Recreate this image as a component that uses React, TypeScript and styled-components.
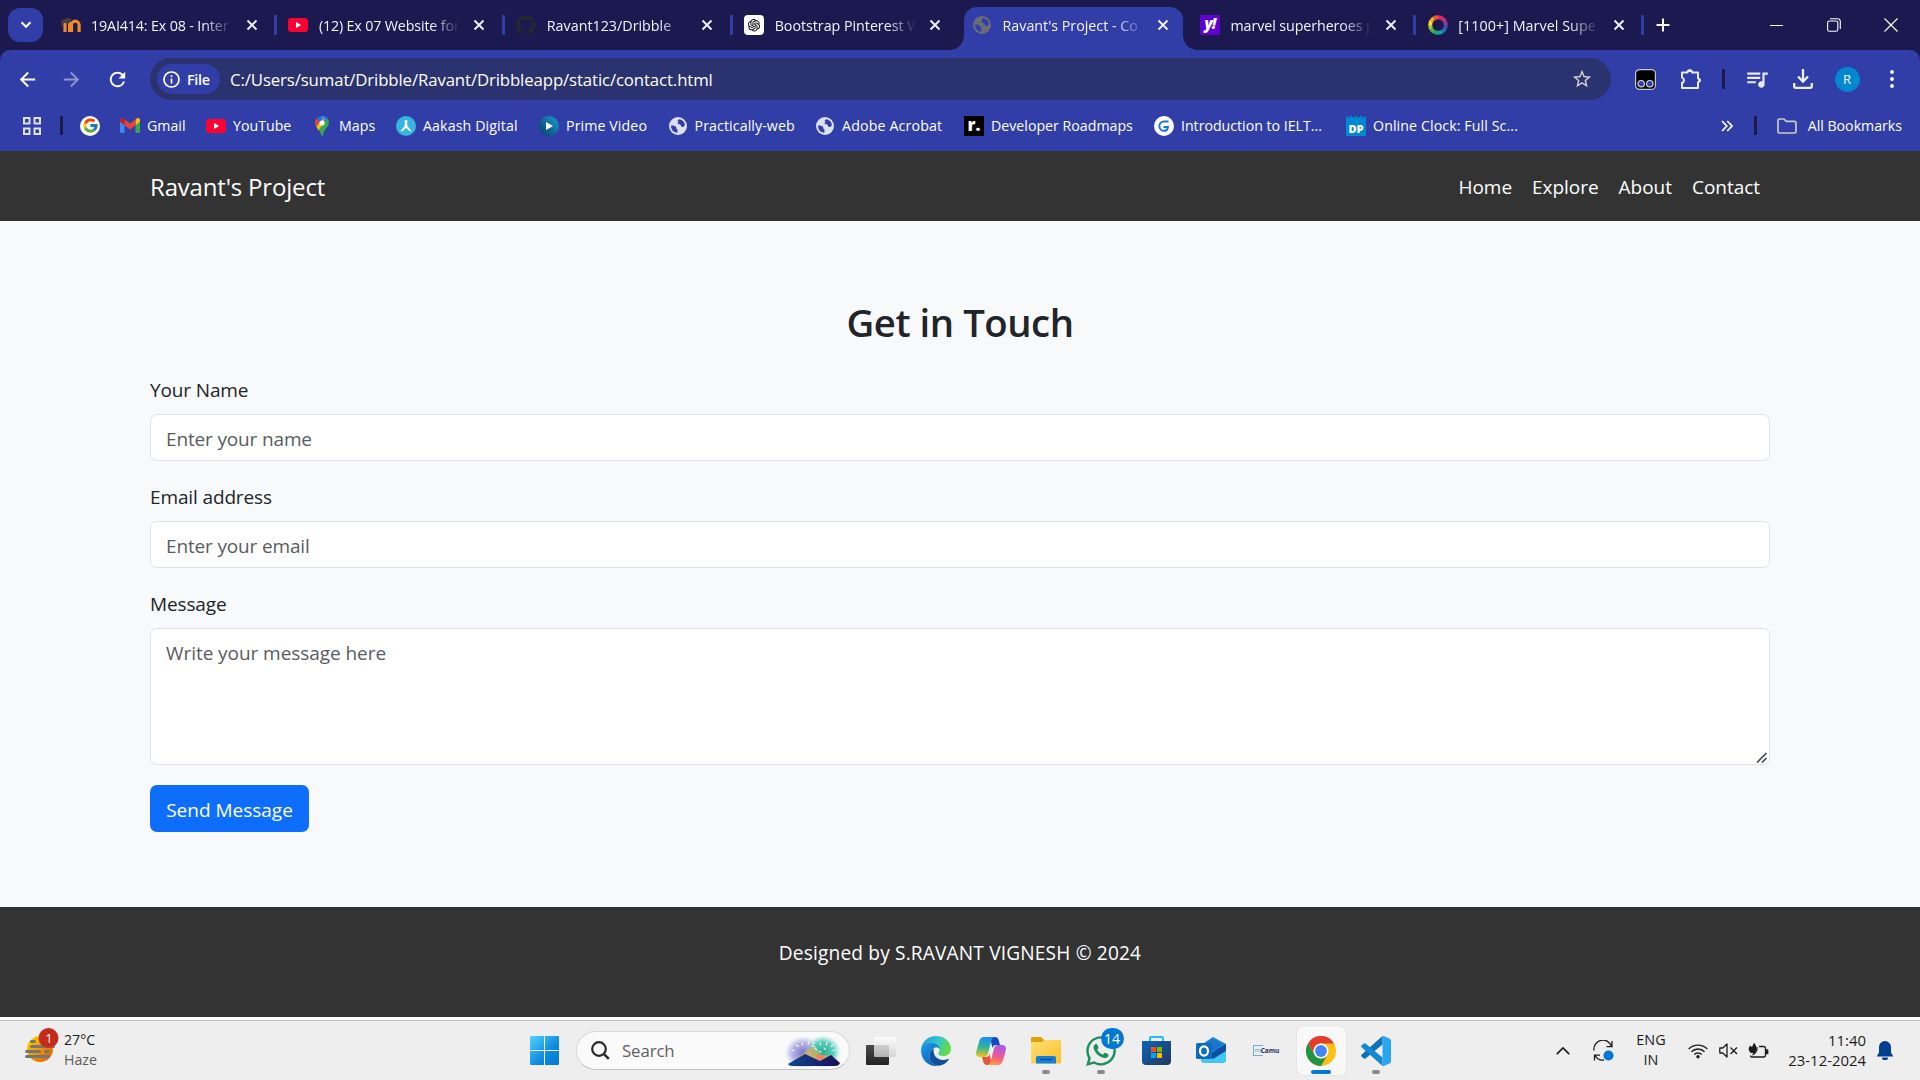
import React from "react";
import styled, { createGlobalStyle, css } from "styled-components";
import { FaGithub, FaWhatsapp } from "react-icons/fa";
import { AiOutlineOpenAI } from "react-icons/ai";
import { FcGoogle } from "react-icons/fc";
import {
  MdQueueMusic,
  MdStarBorder,
  MdRefresh,
  MdArrowBack,
  MdArrowForward,
} from "react-icons/md";

const GlobalStyle = createGlobalStyle`
  *, *::before, *::after { box-sizing: border-box; }
  html, body { margin: 0; padding: 0; overflow: hidden; }
  body {
    font-family: "Open Sans", "Noto Sans", sans-serif;
    background: #fff;
  }
  svg { display: block; flex: none; }
`;

const FRAME = "#1b194f";
const ACCENT = "#323ea8";

const Screen = styled.div`
  width: 1920px;
  height: 1080px;
  display: flex;
  flex-direction: column;
  overflow: hidden;
`;

/* ---------- Browser: tab strip ---------- */

const TabStrip = styled.div`
  height: 50px;
  flex: none;
  display: flex;
  align-items: stretch;
  background: ${FRAME};
  padding-left: 8px;
`;

const TabSearch = styled.div`
  width: 35px;
  height: 34px;
  margin: 8px 5px 0 0;
  border-radius: 12px;
  background: ${ACCENT};
  display: flex;
  align-items: center;
  justify-content: center;
`;

const TabBox = styled.div<{ $active?: boolean; $divider?: boolean }>`
  position: relative;
  width: 227.9px;
  flex: none;
  display: flex;
  align-items: center;
  padding: 0 0 0 12.5px;
  &::after {
    content: "";
    position: absolute;
    right: -1px;
    top: 15px;
    width: 3px;
    height: 20px;
    border-radius: 1px;
    background: ${(p) => (p.$divider ? ACCENT : "transparent")};
  }
  ${(p) =>
    p.$active &&
    css`
      &::before {
        content: "";
        position: absolute;
        inset: 7px 4px 0 4px;
        background: ${ACCENT};
        border-radius: 13px 13px 0 0;
      }
    `}
`;

const Flare = styled.span<{ $side: "left" | "right" }>`
  position: absolute;
  bottom: 0;
  width: 14px;
  height: 14px;
  ${(p) => (p.$side === "left" ? "left: -10px;" : "right: -10px;")}
  background: radial-gradient(
    circle at ${(p) => (p.$side === "left" ? "0 0" : "100% 0")},
    transparent 13.5px,
    ${ACCENT} 14px
  );
`;

const Favicon = styled.span`
  position: relative;
  width: 20px;
  height: 20px;
  flex: none;
  display: flex;
  align-items: center;
  justify-content: center;
`;

const TabTitle = styled.span<{ $tracking?: number }>`
  position: relative;
  margin-left: 10.5px;
  width: 141px;
  flex: none;
  white-space: nowrap;
  font-size: 14.3px;
  line-height: 24px;
  padding-top: 1px;
  letter-spacing: ${(p) => p.$tracking ?? -0.15}px;
  color: #f1f2fb;
  -webkit-mask-image: linear-gradient(90deg, #000 112px, transparent 141px);
  mask-image: linear-gradient(90deg, #000 112px, transparent 141px);
`;

const TabClose = styled.span`
  position: relative;
  margin-left: 13.5px;
  width: 12px;
  display: flex;
`;

const NewTab = styled.div`
  width: 39px;
  display: flex;
  align-items: center;
  justify-content: center;
`;

const WindowControls = styled.div`
  margin-left: auto;
  padding-right: 1px;
  display: flex;
  align-items: center;
`;

const WindowButton = styled.div`
  width: 57px;
  display: flex;
  justify-content: center;
`;

/* ---------- Browser: toolbar ---------- */

const Chrome = styled.div`
  flex: none;
  height: 101px;
  background: ${FRAME};
`;

const ChromeInner = styled.div`
  height: 101px;
  background: ${ACCENT};
  border-radius: 10px 10px 0 0;
  padding-top: 8px;
`;

const Toolbar = styled.div`
  height: 42px;
  display: flex;
  align-items: center;
  padding-left: 5px;
  color: #fff;
`;

const Slot = styled.div<{ $w: number; $dim?: boolean }>`
  width: ${(p) => p.$w}px;
  flex: none;
  display: flex;
  justify-content: center;
  align-items: center;
  opacity: ${(p) => (p.$dim ? 0.45 : 1)};
`;

const Omnibox = styled.div`
  width: 1461px;
  height: 42px;
  margin: 0 11.5px 0 10px;
  border-radius: 21px;
  background: #2b3270;
  display: flex;
  align-items: center;
  padding: 0 18px 0 7px;
`;

const FileChip = styled.div`
  width: 63px;
  height: 30px;
  border-radius: 15px;
  background: ${ACCENT};
  display: flex;
  align-items: center;
  gap: 7px;
  padding-left: 6px;
  font-size: 14.3px;
  font-weight: 600;
  letter-spacing: -0.3px;
`;

const Url = styled.div`
  margin-left: 10px;
  flex: 1;
  font-size: 16.8px;
  line-height: 26px;
  padding-top: 1px;
  letter-spacing: -0.12px;
  color: #fff;
`;

const Rule = styled.span<{ $h: number }>`
  width: 2.5px;
  height: ${(p) => p.$h}px;
  flex: none;
  border-radius: 1px;
  background: ${FRAME};
`;

const Avatar = styled.div`
  width: 25px;
  height: 25px;
  border-radius: 50%;
  background: #0288d1;
  font-size: 13px;
  line-height: 25px;
  text-align: center;
  color: #fff;
`;

const BookmarkBar = styled.div`
  height: 51px;
  display: flex;
  align-items: center;
`;

const Bookmark = styled.div<{ $w?: number; $tracking?: number }>`
  width: ${(p) => (p.$w ? `${p.$w}px` : "auto")};
  flex: none;
  display: flex;
  align-items: center;
  gap: 7px;
  white-space: nowrap;
  font-size: 14.2px;
  line-height: 24px;
  letter-spacing: ${(p) => p.$tracking ?? 0}px;
  color: #fff;
`;

const BookmarkEnd = styled.div`
  margin-left: auto;
  padding-right: 18px;
  display: flex;
  align-items: center;
`;

const FolderSlot = styled.span`
  margin: 0 4px 0 20px;
`;

/* ---------- Web page ---------- */

const NavBar = styled.nav`
  height: 70px;
  flex: none;
  background: #333;
  display: flex;
  align-items: center;
  justify-content: space-between;
  padding: 1px 150px 0;
  color: #fff;
`;

const Brand = styled.span`
  font-size: 24px;
  line-height: 38px;
  letter-spacing: -0.18px;
`;

const NavLinks = styled.div`
  display: flex;
`;

const NavLink = styled.a`
  padding: 0 10px;
  font-size: 19px;
  line-height: 30px;
  letter-spacing: -0.03px;
  color: #fff;
`;

const ContactSection = styled.main`
  height: 686px;
  flex: none;
  background: #f8f9fb;
  padding: 75px 150px;
`;

const Heading = styled.h2`
  height: 48px;
  margin: 0 0 30px;
  padding-top: 2px;
  font-size: 38.3px;
  line-height: 48px;
  font-weight: 600;
  letter-spacing: -0.46px;
  text-align: center;
  color: #212529;
`;

const Field = styled.div`
  display: flex;
  flex-direction: column;
  gap: 10px;
  margin-bottom: 20px;
  font-size: 19px;
  color: #212529;
`;

const FieldLabel = styled.label`
  height: 30px;
  line-height: 30px;
  padding-top: 1px;
  letter-spacing: -0.13px;
`;

const controlStyle = css`
  width: 1620px;
  display: block;
  border: 1px solid #dee2e6;
  border-radius: 7px;
  background: #fff;
  padding: 9px 15px 6px;
  font: inherit;
  line-height: 30px;
  letter-spacing: -0.15px;
  color: #212529;
  outline: none;
  &::placeholder {
    color: #595c5f;
    opacity: 1;
  }
`;

const TextInput = styled.input`
  ${controlStyle}
  height: 47px;
`;

const TextAreaWrap = styled.div`
  position: relative;
  height: 137px;
`;

const TextArea = styled.textarea`
  ${controlStyle}
  height: 137px;
  resize: none;
  letter-spacing: -0.06px;
`;

const Grip = styled.svg`
  position: absolute;
  right: 2px;
  bottom: 1px;
`;

const SubmitButton = styled.button`
  width: 159px;
  height: 47px;
  border: 0;
  border-radius: 7px;
  background: #0d6efd;
  color: #fff;
  font-family: inherit;
  font-size: 19px;
  line-height: 30px;
  padding: 3px 0 0;
`;

const Footer = styled.footer`
  height: 110px;
  flex: none;
  background: #333;
  color: #fff;
  padding-top: 31px;
  text-align: center;
  font-size: 19.1px;
  line-height: 30px;
  letter-spacing: 0.17px;
`;

/* ---------- Taskbar ---------- */

const Taskbar = styled.div`
  margin-top: 3px;
  height: 60px;
  flex: none;
  background: #eee;
  border-top: 1px solid #bdbdbd;
  display: flex;
  align-items: center;
  color: #1c1c1c;
`;

const Weather = styled.div`
  width: 517px;
  padding-left: 24px;
  display: flex;
  align-items: center;
  gap: 4px;
`;

const TwoLines = styled.div<{ $align?: string; $w?: number; $size?: number }>`
  width: ${(p) => (p.$w ? `${p.$w}px` : "auto")};
  text-align: ${(p) => p.$align ?? "left"};
  font-size: ${(p) => p.$size ?? 14.4}px;
  line-height: 20px;
  padding-bottom: 2px;
  white-space: nowrap;
`;

const Muted = styled.div`
  color: #5c5c5c;
`;

const SearchBox = styled.div`
  width: 274px;
  height: 39px;
  margin: 0 3.5px 0 4px;
  border: 1px solid #d9d9d9;
  border-bottom-color: #c3c3c3;
  border-radius: 20px;
  background: #fafafa;
  display: flex;
  align-items: center;
  padding: 0 8px 0 14px;
  font-size: 16.8px;
  letter-spacing: -0.1px;
  color: #5f5f5f;
`;

const SearchLabel = styled.span`
  margin-left: 12px;
  flex: 1;
`;

const TaskApp = styled.div<{ $active?: boolean }>`
  position: relative;
  width: ${(p) => (p.$active ? 49 : 55)}px;
  height: 49px;
  margin: 0 ${(p) => (p.$active ? 3 : 0)}px;
  flex: none;
  display: flex;
  align-items: center;
  justify-content: center;
  border-radius: 6px;
  background: ${(p) => (p.$active ? "#f8f8f8" : "transparent")};
  box-shadow: ${(p) => (p.$active ? "0 0 1px #bbb" : "none")};
`;

const RunningMark = styled.span<{ $focused?: boolean }>`
  position: absolute;
  bottom: 1px;
  left: 50%;
  transform: translateX(-50%);
  width: ${(p) => (p.$focused ? 20 : 8)}px;
  height: 4px;
  border-radius: 2px;
  background: ${(p) => (p.$focused ? "#0078d4" : "#8a8a8a")};
`;

const Badge = styled.span`
  position: absolute;
  left: 27px;
  top: 2px;
  width: 23px;
  height: 21px;
  border-radius: 11px;
  background: #0078d4;
  color: #fff;
  font-size: 14px;
  line-height: 21px;
  text-align: center;
`;

const Tray = styled.div`
  margin-left: auto;
  padding-right: 20px;
  display: flex;
  align-items: center;
`;

/* ---------- Drawings ---------- */

const CloseMark = () => (
  <svg width="12" height="12" viewBox="0 0 12 12" stroke="#f1f2fb" strokeWidth="1.9" fill="none">
    <path d="M1.5 1.5l9 9M10.5 1.5l-9 9" />
  </svg>
);

const MoodleIcon = () => (
  <svg width="20" height="16" viewBox="0 0 20 16">
    <path d="M4 6v9M8.6 15V7.8a3.2 3.2 0 0 1 1.4-2M10.5 15V8a3.5 3.5 0 0 1 7.6 0v7" fill="none" stroke="#f08a24" strokeWidth="3.2" />
    <path d="M0 4l6-3 5 1-4 4.5-4-.7z" fill="#4a4340" />
    <path d="M1 4v5" stroke="#6a5a50" strokeWidth=".8" />
  </svg>
);

const YouTubeIcon = () => (
  <svg width="20" height="14" viewBox="0 0 20 14">
    <rect width="20" height="14" rx="3" fill="#ff0033" />
    <path d="M8 4l5.200 3L8 10z" fill="#fff" />
  </svg>
);

const GlobeIcon = ({ color, hole }: { color: string; hole: string }) => (
  <svg width="18" height="18" viewBox="0 0 18 18">
    <circle cx="9" cy="9" r="9" fill={color} />
    <path d="M2 8.500c2.500 0 4.200.3 5 1.300.6.8-.1 1.900 1 2.300.9.3.4 1.800.3 3.600C4.600 15.600 2 12.700 2 8.500z" fill={hole} />
    <path d="M10.500 2.200c-1.800.7-2.300 1.500-1.300 2.200.9.7-.9 1-.6 2.200.3 1 2.300.3 3 1.300.6.9.3 1.700 1.700 2 1.300.2 2-.7 2.600-1.600C15.700 5 13.500 2.700 10.500 2.200z" fill={hole} />
  </svg>
);

const ChatGptIcon = () => (
  <svg width="20" height="20" viewBox="0 0 20 20">
    <rect width="20" height="20" rx="4" fill="#fff" />
    <AiOutlineOpenAI x={2} y={2} width={16} height={16} size={16} color="#111" />
  </svg>
);

const YahooTile = styled.span`
  width: 20px;
  height: 20px;
  background: #5f01d1;
  color: #fff;
  font-size: 15px;
  font-weight: 800;
  font-style: italic;
  line-height: 17px;
  letter-spacing: -1px;
  text-align: center;
`;

const wheel = ["#e8275b", "#c8307f", "#8a3b98", "#4a4fa3", "#2471b8", "#1b9bb5", "#23a567", "#55b447", "#a8c93a", "#f5e131", "#f6a81c", "#ee5a24"];
const WheelIcon = () => (
  <svg width="20" height="20" viewBox="-10 -10 20 20">
    {wheel.map((c, i) => (
      <path key={c} d="M0 -9.800A9.800 9.800 0 0 1 4.900 -8.490L2.900 -5.020A5.800 5.800 0 0 0 0 -5.800z" fill={c} transform={`rotate(${i * 30})`} />
    ))}
  </svg>
);

const GoogleBadge = styled.span`
  width: 20px;
  height: 20px;
  border-radius: 50%;
  background: #fff;
  display: flex;
  align-items: center;
  justify-content: center;
`;

const GmailIcon = () => (
  <svg width="20" height="15" viewBox="0 0 20 15">
    <path d="M0 2v11.500A1.500 1.500 0 0 0 1.500 15H4.500V5z" fill="#4285f4" />
    <path d="M20 2v11.500a1.500 1.500 0 0 1-1.500 1.500H15.500V5z" fill="#34a853" />
    <path d="M15.500 1.500v5.700L20 3.800V2c0-1.900-2.100-2.600-3.400-1.500z" fill="#fbbc04" />
    <path d="M4.500 7.200V1.500L10 5.600l5.500-4.100v5.700L10 11.400z" fill="#ea4335" />
    <path d="M0 2v1.800l4.500 3.400V1.500L3.400.5C2.100-.6 0 .1 0 2z" fill="#c5221f" />
  </svg>
);

const MapsIcon = () => (
  <svg width="20" height="20" viewBox="0 0 20 20">
    <path d="M10 0a7 7 0 0 1 5.200 2.300L10 8 6 2z" fill="#4285f4" />
    <path d="M4.700 2.400A7 7 0 0 1 7.800.4L11 4.500 6.500 9.500 3 7a7 7 0 0 1 1.700-4.600z" fill="#1a73e8" />
    <path d="M4.500 2.600L8 5.500 4.300 10.500A7 7 0 0 1 4.500 2.600z" fill="#ea4335" />
    <path d="M4.200 10.500L11.500 2.500l1.500 5-6.500 7z" fill="#fbbc04" />
    <path d="M15.200 2.300c2.700 3 2 6.500-.2 9.200-2.100 2.600-3.600 4.500-4 7.500-.2 1.300-1.500 1.300-1.800 0-.4-2.200-1.400-3.500-2.700-5z" fill="#34a853" />
    <circle cx="10" cy="7" r="2.600" fill="#fff" />
  </svg>
);

const AakashIcon = () => (
  <svg width="20" height="20" viewBox="0 0 20 20">
    <circle cx="10" cy="10" r="10" fill="#35b5e0" />
    <circle cx="10" cy="5.500" r="1.600" fill="#fff" />
    <path d="M9 6.500h2l.6 4 4 4.500-1.500.6L10 12l-4.100 3.600-1.500-.6 4-4.500z" fill="#fff" />
  </svg>
);

const PrimeIcon = () => (
  <svg width="20" height="20" viewBox="0 0 20 20">
    <defs>
      <linearGradient id="prime" x1="0" y1="1" x2="1" y2="0">
        <stop offset="0" stopColor="#0a3a66" />
        <stop offset="1" stopColor="#16a0cf" />
      </linearGradient>
    </defs>
    <circle cx="10" cy="10" r="10" fill="url(#prime)" />
    <path d="M7 6l7 4-7 4z" fill="#fff" />
  </svg>
);

const RoadmapTile = styled.span`
  width: 20px;
  height: 20px;
  background: #000;
  color: #fff;
  font-size: 17px;
  line-height: 17px;
  font-weight: 800;
  text-align: center;
`;

const ClockTile = styled.span`
  width: 20px;
  height: 20px;
  background: radial-gradient(circle at 2.5px 0, ${ACCENT} 1.300px, #0288d1 1.800px) 0 0 / 5px 20px;
  color: #fff;
  font-size: 11px;
  line-height: 14px;
  padding-top: 6px;
  font-weight: 800;
  letter-spacing: 0;
  text-align: center;
`;

const IeltsIcon = () => (
  <svg width="20" height="20" viewBox="0 0 20 20">
    <circle cx="10" cy="10" r="10" fill="#fff" />
    <path d="M14.500 5.500H10a4.500 4.500 0 0 0 0 9.300q3.500 0 4-3.800H9.500" fill="none" stroke="#1976d2" strokeWidth="2" />
  </svg>
);

const HazeIcon = () => (
  <svg width="36" height="48" viewBox="0 0 36 48">
    <defs>
      <linearGradient id="sun" x1="0" y1="0" x2="1" y2="1">
        <stop offset="0" stopColor="#ffdc00" />
        <stop offset="1" stopColor="#e65100" />
      </linearGradient>
    </defs>
    <circle cx="16" cy="22" r="13" fill="url(#sun)" />
    <path d="M7.500 14.500h3M7.500 19.500h22M2.500 24.500h13M21.500 24.500h3M2.500 29.500h22" stroke="#757575" strokeWidth="3" strokeLinecap="round" />
    <circle cx="24.500" cy="11" r="10" fill="#c42b1c" />
    <text x="25" y="15.500" fontSize="13" fill="#fff" textAnchor="middle">1</text>
  </svg>
);

const StartIcon = () => (
  <svg width="29" height="29" viewBox="0 0 29 29">
    <defs>
      <linearGradient id="win" x1="0" y1="0" x2="1" y2="1">
        <stop offset="0" stopColor="#4fd4ff" />
        <stop offset=".6" stopColor="#1089e0" />
        <stop offset="1" stopColor="#0078d4" />
      </linearGradient>
    </defs>
    <path d="M1 0h13v14H0V1q0-1 1-1zM15 0h13q1 0 1 1v13H15zM0 15h14v14H1q-1 0-1-1zM15 15h14v13q0 1-1 1H15z" fill="url(#win)" />
  </svg>
);

const SearchArt = () => (
  <svg width="56" height="32" viewBox="0 0 56 32">
    <defs>
      <radialGradient id="glowL">
        <stop offset="0" stopColor="#7a76cc" />
        <stop offset=".6" stopColor="#a3a0e2" stopOpacity=".8" />
        <stop offset="1" stopColor="#b0aef0" stopOpacity="0" />
      </radialGradient>
      <radialGradient id="glowR">
        <stop offset="0" stopColor="#27b08f" />
        <stop offset=".6" stopColor="#3cc4b4" stopOpacity=".85" />
        <stop offset="1" stopColor="#8be0d8" stopOpacity="0" />
      </radialGradient>
      <linearGradient id="hill" x1="0" y1="0" x2="1" y2="0">
        <stop offset="0" stopColor="#0d4a8c" />
        <stop offset="1" stopColor="#1d0a5c" />
      </linearGradient>
    </defs>
    <ellipse cx="18" cy="18" rx="18" ry="17" fill="url(#glowL)" />
    <ellipse cx="38" cy="17" rx="18" ry="17" fill="url(#glowR)" />
    <path d="M10 25l10-8 8-6 8 10 8-1 6 6z" fill="#d9ae5c" opacity=".75" />
    <path d="M30 20l5 6 6-6z" fill="#ff7a5c" />
    <path d="M3 29l17-10 15 7 11-6 9 8q-1 3-5 3H7q-3 0-4-2z" fill="url(#hill)" />
    <path d="M11 10l2.500 1.500M17 8l.6 2M24 7l-.7 2M7 15l2 .7M30 12l-3-1.500M32 15l-2-1.500M35 8l.7 2M42 7l-.8 3M48 10l-2 1.500M50 15l-3 .7M36 17l-2-.7M39 13l1.500 1.500M29 9l-.7-1.500" stroke="#fffbe0" strokeWidth="1.100" strokeLinecap="round" />
  </svg>
);

const TaskViewIcon = () => (
  <svg width="30" height="28" viewBox="0 0 30 28">
    <defs>
      <linearGradient id="tvb" x1="0" y1="0" x2="0" y2="1">
        <stop offset="0" stopColor="#4a4a4a" />
        <stop offset="1" stopColor="#222" />
      </linearGradient>
      <linearGradient id="tvf" x1="0" y1="0" x2="0" y2="1">
        <stop offset="0" stopColor="#fff" />
        <stop offset="1" stopColor="#d0d0d0" />
      </linearGradient>
    </defs>
    <rect x="0" y="8" width="23" height="20" rx="1" fill="url(#tvb)" />
    <rect x="8" y="0" width="22" height="20" rx="1" fill="url(#tvf)" opacity=".82" />
  </svg>
);

const EdgeIcon = () => (
  <svg width="30" height="30" viewBox="0 0 30 30">
    <defs>
      <linearGradient id="eg1" x1="0" y1="0" x2="1" y2=".3">
        <stop offset="0" stopColor="#2196d8" />
        <stop offset=".55" stopColor="#32c3d2" />
        <stop offset="1" stopColor="#62dc4a" />
      </linearGradient>
      <linearGradient id="eg2" x1="0" y1="0" x2=".6" y2="1">
        <stop offset="0" stopColor="#1a9be8" />
        <stop offset="1" stopColor="#0a63c0" />
      </linearGradient>
    </defs>
    <path d="M0 14C.5 6 7 0 15 0c9 0 15 6.500 15 12.500 0 5-3.600 7.500-7.500 7.500-3 0-5.200-1-5.200-2.300 0-1 1.300-1.500 1.300-3.700C18.600 11 15 8.500 10.500 8.500 5 8.500 1 11.500 0 14z" fill="url(#eg1)" />
    <path d="M0 14c1-4.500 5-7 10-7 5.500 0 8.600 3 8.600 6.500-1-1.800-2.600-2.500-4.200-2-3.400 1-6 4.300-6 8.700 0 4.500 3.500 8.500 8.600 9.600C7.500 31 0 24 0 14z" fill="url(#eg2)" />
    <path d="M12.800 12.300c-3.300 2-4.700 5-4.400 8.500.4 4.800 4.500 8.800 9.600 9 4-.4 7.800-2.900 9.800-6.200.4-.8-.2-1-.8-.7C19 26.500 11 21 12.800 12.300z" fill="#0f4f9c" />
  </svg>
);

const CopilotIcon = () => (
  <svg width="30" height="28" viewBox="0 0 30 28">
    <defs>
      <linearGradient id="cp1" x1=".4" y1="0" x2=".3" y2="1">
        <stop offset="0" stopColor="#1b8ff0" />
        <stop offset=".5" stopColor="#2fb39a" />
        <stop offset="1" stopColor="#f2c811" />
      </linearGradient>
      <linearGradient id="cp2" x1=".6" y1="0" x2=".4" y2="1">
        <stop offset="0" stopColor="#a35cf0" />
        <stop offset=".55" stopColor="#f0568f" />
        <stop offset="1" stopColor="#ff9a4a" />
      </linearGradient>
    </defs>
    <path d="M14 0h5c2 0 3 1 3.600 3l1.400 5h-4c-2 0-3 1-3.600 3z" fill="#1648c0" />
    <path d="M16 28h-5c-2 0-3-1-3.600-3L6 20h4c2 0 3-1 3.600-3z" fill="#e8543f" />
    <path d="M8 0h11c-2 .3-3 1.500-3.600 3.500L12 16.500c-.6 2-2 3.500-4 3.500H4c-3.500 0-4.600-2.500-3.700-5.500L3.300 4C4.200 1.300 5.500 0 8 0z" fill="url(#cp1)" />
    <path d="M22 28H11c2-.3 3-1.500 3.600-3.500L18 11.500c.6-2 2-3.500 4-3.500h4c3.500 0 4.600 2.500 3.700 5.500L26.700 24c-.9 2.700-2.200 4-4.700 4z" fill="url(#cp2)" />
  </svg>
);

const ExplorerIcon = () => (
  <svg width="30" height="27" viewBox="0 0 30 27">
    <defs>
      <linearGradient id="fold" x1="0" y1="0" x2="1" y2="1">
        <stop offset="0" stopColor="#ffe17a" />
        <stop offset="1" stopColor="#fdbf22" />
      </linearGradient>
    </defs>
    <path d="M1 0h9l3 3h0l-2 5H0V1q0-1 1-1z" fill="#dfa009" />
    <path d="M0 5h11l3-2h15q1 0 1 1v21q0 1.500-1.500 1.500H1.500Q0 26.500 0 25z" fill="url(#fold)" />
    <path d="M5 26.500V21q0-2 2-2h16q2 0 2 2v5.500z" fill="#1380d8" />
    <path d="M9 22.500h12" stroke="#0a4c94" strokeWidth="1.300" />
  </svg>
);

const StoreIcon = () => (
  <svg width="29" height="29" viewBox="0 0 29 29">
    <defs>
      <linearGradient id="store" x1="0" y1="0" x2="1" y2="1">
        <stop offset="0" stopColor="#0b66b8" />
        <stop offset="1" stopColor="#24355c" />
      </linearGradient>
    </defs>
    <path d="M8 6V2q0-1 1-1h11q1 0 1 1v4" fill="none" stroke="#28bdf0" strokeWidth="2" />
    <path d="M0 5h29v20q0 4-4 4H4q-4 0-4-4z" fill="url(#store)" />
    <path d="M9 11h5v5H9z" fill="#f25022" />
    <path d="M15 11h5v5h-5z" fill="#7fba00" />
    <path d="M9 17h5v5H9z" fill="#00a4ef" />
    <path d="M15 17h5v5h-5z" fill="#ffb900" />
  </svg>
);

const OutlookIcon = () => (
  <svg width="30" height="27" viewBox="0 0 30 27">
    <path d="M5 8L17 0l13 7v10H5z" fill="#1b86d8" />
    <path d="M8 7l9-5 9 5-8 8z" fill="#1a74cc" />
    <path d="M5 17l12-3 13-5v14q0 3-3 3H8q-3 0-3-3z" fill="#3fc8f4" />
    <path d="M13 17l17-10v7l-13 8z" fill="#0b4f9e" />
    <rect x="0" y="6" width="16" height="16" rx="1.500" fill="#0f6cbd" />
    <ellipse cx="8" cy="14" rx="4" ry="4.600" fill="none" stroke="#fff" strokeWidth="2.200" />
  </svg>
);

const CamuBox = styled.span`
  display: flex;
  align-items: center;
`;
const CamuFrame = styled.span`
  width: 10px;
  height: 11px;
  border: 1px solid #69b1dc;
  border-right: 0;
  font-size: 5px;
  line-height: 9px;
  color: #2a9bd6;
  padding-left: 1px;
`;
const CamuName = styled.span`
  font-size: 6.5px;
  line-height: 10px;
  font-weight: 700;
  color: #26305e;
  margin-left: -2px;
`;

const ChromeIcon = () => (
  <svg width="30" height="30" viewBox="0 0 30 30">
    <circle cx="15" cy="15" r="15" fill="#fbc116" />
    <path d="M2 7.500A15 15 0 0 1 28 7.500H15A7.500 7.500 0 0 0 8.500 18.750z" fill="#e33b2e" />
    <path d="M2 7.500A15 15 0 0 0 15 30L21.500 18.750A7.500 7.500 0 0 1 8.500 18.750z" fill="#229342" />
    <circle cx="15" cy="15" r="7.500" fill="#fff" />
    <circle cx="15" cy="15" r="5.900" fill="#4285f4" />
  </svg>
);

const CodeIcon = () => (
  <svg width="30" height="30" viewBox="0 0 30 30">
    <path d="M21.500 0v8.500L4.500 22.500q-.9.600-1.700 0L.5 20.500q-.9-.9 0-1.800z" fill="#0f6fb8" />
    <path d="M21.500 30v-8.500L4.500 7.500q-.9-.6-1.700 0L.5 9.500q-.9.900 0 1.800z" fill="#1488d0" />
    <path d="M21.500 0q.6-.3 1.300 0l6 2.800q1.200.6 1.200 2v20.400q0 1.400-1.200 2l-6 2.800q-.7.300-1.300 0z" fill="#2ba6ee" />
  </svg>
);

const BatteryIcon = () => (
  <svg width="21" height="18" viewBox="0 0 21 18" fill="none" stroke="#1c1c1c" strokeWidth="1.300">
    <path d="M11 4.500h4.500a2 2 0 0 1 2 2V13a2 2 0 0 1-2 2H4.500q-2 0-2-1.500" />
    <path d="M18.500 8v3.500h1.200V8z" fill="#1c1c1c" />
    <path d="M6 .7c2.500 2.600 3.500 6 .7 10.300H3C-.5 8.500.5 5 2.500 3.800L4 5z" fill="#1c1c1c" stroke="none" />
    <path d="M9 5q.5 5-4.500 8" />
  </svg>
);

/* ---------- Data ---------- */

interface TabInfo {
  title: string;
  icon: React.ReactNode;
  active?: boolean;
  divider?: boolean;
  tracking?: number;
}

const tabs: TabInfo[] = [
  { title: "19AI414: Ex 08 - Inter", icon: <MoodleIcon />, divider: true, tracking: -0.15 },
  { title: "(12) Ex 07 Website for", icon: <YouTubeIcon />, divider: true, tracking: -0.16 },
  { title: "Ravant123/Dribble", icon: <FaGithub size={20} color="#24292f" />, divider: true, tracking: 0 },
  { title: "Bootstrap Pinterest W", icon: <ChatGptIcon />, tracking: -0.04 },
  { title: "Ravant's Project - Co", icon: <GlobeIcon color="#6a6d78" hole={ACCENT} />, active: true, tracking: -0.02 },
  { title: "marvel superheroes p", icon: <YahooTile>y!</YahooTile>, divider: true, tracking: -0.1 },
  { title: "[1100+] Marvel Supe", icon: <WheelIcon />, divider: true, tracking: 0.05 },
];

const bookmarks: { name: string; w: number; icon: React.ReactNode; tracking?: number }[] = [
  { name: "", w: 40, icon: <GoogleBadge><FcGoogle size={17} /></GoogleBadge> },
  { name: "Gmail", w: 86, icon: <GmailIcon /> },
  { name: "YouTube", w: 106, icon: <YouTubeIcon /> },
  { name: "Maps", w: 84, icon: <MapsIcon />, tracking: 0.1 },
  { name: "Aakash Digital", w: 143, icon: <AakashIcon />, tracking: 0.12 },
  { name: "Prime Video", w: 128.5, icon: <PrimeIcon />, tracking: 0.1 },
  { name: "Practically-web", w: 147.5, icon: <GlobeIcon color="#dcdff5" hole={ACCENT} />, tracking: 0.1 },
  { name: "Adobe Acrobat", w: 149, icon: <GlobeIcon color="#dcdff5" hole={ACCENT} />, tracking: 0.16 },
  { name: "Developer Roadmaps", w: 190, icon: <RoadmapTile>r.</RoadmapTile>, tracking: 0 },
  { name: "Introduction to IELT...", w: 192, icon: <IeltsIcon />, tracking: -0.02 },
  { name: "Online Clock: Full Sc...", w: 180, icon: <ClockTile>DP</ClockTile>, tracking: 0.1 },
];

const navLinks = ["Home", "Explore", "About", "Contact"];

export default function App() {
  return (
    <>
      <GlobalStyle />
      <Screen>
        <TabStrip>
          <TabSearch>
            <svg width="12" height="8" viewBox="0 0 12 8" fill="none" stroke="#fff" strokeWidth="2">
              <path d="M1.500 1.200L6 5.800l4.500-4.600" />
            </svg>
          </TabSearch>
          {tabs.map((t) => (
            <TabBox key={t.title} $active={t.active} $divider={t.divider}>
              {t.active && (
                <>
                  <Flare $side="left" />
                  <Flare $side="right" />
                </>
              )}
              <Favicon>{t.icon}</Favicon>
              <TabTitle $tracking={t.tracking}>{t.title}</TabTitle>
              <TabClose><CloseMark /></TabClose>
            </TabBox>
          ))}
          <NewTab>
            <svg width="14" height="14" viewBox="0 0 14 14" stroke="#fff" strokeWidth="2">
              <path d="M7 .5v13M.5 7h13" />
            </svg>
          </NewTab>
          <WindowControls>
            <WindowButton>
              <svg width="13" height="13" viewBox="0 0 13 13" stroke="#fff"><path d="M0 6.500h13" /></svg>
            </WindowButton>
            <WindowButton>
              <svg width="14" height="14" viewBox="0 0 14 14" fill="none" stroke="#fff" strokeWidth="1.100">
                <rect x=".6" y="3" width="10.200" height="10.200" rx="1.800" />
                <path d="M3 .7h7.500a2.800 2.800 0 0 1 2.800 2.800V11" />
              </svg>
            </WindowButton>
            <WindowButton>
              <svg width="14" height="14" viewBox="0 0 14 14" stroke="#fff" strokeWidth="1.200"><path d="M.5.5l13 13M13.500.5l-13 13" /></svg>
            </WindowButton>
          </WindowControls>
        </TabStrip>

        <Chrome>
          <ChromeInner>
            <Toolbar>
              <Slot $w={44.5}><MdArrowBack size={23} /></Slot>
              <Slot $w={44.5} $dim><MdArrowForward size={23} /></Slot>
              <Slot $w={46}><MdRefresh size={23} /></Slot>
              <Omnibox>
                <FileChip>
                  <svg width="17" height="17" viewBox="0 0 17 17" fill="none" stroke="#fff" strokeWidth="1.700">
                    <circle cx="8.500" cy="8.500" r="7.500" />
                    <path d="M8.500 7.500v5M8.500 4.200v1.900" />
                  </svg>
                  File
                </FileChip>
                <Url>C:/Users/sumat/Dribble/Ravant/Dribbleapp/static/contact.html</Url>
                <MdStarBorder size={22} color="#d0d0d0" />
              </Omnibox>
              <Slot $w={45}>
                <svg width="21" height="21" viewBox="0 0 21 21">
                  <rect x=".6" y=".6" width="19.800" height="19.800" rx="4" fill="#000" stroke="#c4c6d6" strokeWidth="1.200" />
                  <circle cx="6.200" cy="14.700" r="3.200" fill={ACCENT} stroke="#d6d6d6" strokeWidth="1.200" />
                  <circle cx="14.800" cy="14.700" r="3.200" fill={ACCENT} stroke="#d6d6d6" strokeWidth="1.200" />
                </svg>
              </Slot>
              <Slot $w={46}>
                <svg width="22" height="22" viewBox="0 0 22 22" fill="none" stroke="#e8eafc" strokeWidth="2" strokeLinejoin="round">
                  <path d="M2 4.500h5.500a2.200 2.200 0 0 1 4.500 0h6v5.700a2.200 2.200 0 0 1 0 4.300V20H2v-5.200a2.700 2.700 0 0 0 0-5.200z" />
                  <path d="M8 3.500a1.900 1.900 0 0 1 3.700 0zM19 10.500a1.900 1.900 0 0 1 0 3.700z" fill="#e8eafc" strokeWidth="1" />
                </svg>
              </Slot>
              <Slot $w={20}><Rule $h={20} /></Slot>
              <Slot $w={47}><MdQueueMusic size={26} color="#e8eafc" /></Slot>
              <Slot $w={44}>
                <svg width="20" height="20" viewBox="0 0 20 20" fill="none" stroke="#eef0ff" strokeWidth="2.300">
                  <path d="M10 0v12M5 7.500l5 5 5-5M1.200 14v3.200q0 1.600 1.600 1.600h14.400q1.600 0 1.600-1.600V14" />
                </svg>
              </Slot>
              <Slot $w={45}><Avatar>R</Avatar></Slot>
              <Slot $w={45}>
                <svg width="4" height="18" viewBox="0 0 4 18" fill="#fff">
                  <circle cx="2" cy="2" r="1.900" /><circle cx="2" cy="9" r="1.900" /><circle cx="2" cy="16" r="1.900" />
                </svg>
              </Slot>
            </Toolbar>
            <BookmarkBar>
              <Slot $w={4} />
              <Slot $w={56}>
                <svg width="18" height="18" viewBox="0 0 18 18" fill="none" stroke="#dfe2fb" strokeWidth="2">
                  <path d="M1 1h5.500v5.500H1zM11.500 1H17v5.500h-5.500zM1 11.500h5.500V17H1zM11.500 11.500H17V17h-5.500z" />
                </svg>
              </Slot>
              <Rule $h={19} />
              <Slot $w={17.5} />
              {bookmarks.map((b) => (
                <Bookmark key={b.name} $w={b.w} $tracking={b.tracking}>
                  <Favicon>{b.icon}</Favicon>
                  {b.name}
                </Bookmark>
              ))}
              <BookmarkEnd>
                <svg width="12" height="12" viewBox="0 0 12 12" fill="none" stroke="#fff" strokeWidth="1.700">
                  <path d="M1 1l4.800 5L1 11M6.200 1L11 6l-4.800 5" />
                </svg>
                <Slot $w={21.5} />
                <Rule $h={19} />
                <FolderSlot>
                  <svg width="20" height="16" viewBox="0 0 20 16" fill="none" stroke="#c9c9cf" strokeWidth="1.700" strokeLinejoin="round">
                    <path d="M1 2.500Q1 1 2.500 1H7l2.200 2.300h8.300q1.500 0 1.500 1.500v8.700q0 1.500-1.500 1.500h-15Q1 15 1 13.500z" />
                  </svg>
                </FolderSlot>
                <Slot $w={7} />
                <Bookmark $tracking={-0.02}>All Bookmarks</Bookmark>
              </BookmarkEnd>
            </BookmarkBar>
          </ChromeInner>
        </Chrome>

        <NavBar>
          <Brand>Ravant's Project</Brand>
          <NavLinks>
            {navLinks.map((l) => (
              <NavLink key={l}>{l}</NavLink>
            ))}
          </NavLinks>
        </NavBar>
        <ContactSection>
          <Heading>Get in Touch</Heading>
          <Field>
            <FieldLabel>Your Name</FieldLabel>
            <TextInput placeholder="Enter your name" />
          </Field>
          <Field>
            <FieldLabel>Email address</FieldLabel>
            <TextInput placeholder="Enter your email" />
          </Field>
          <Field>
            <FieldLabel>Message</FieldLabel>
            <TextAreaWrap>
              <TextArea placeholder="Write your message here" />
              <Grip width="12" height="12" viewBox="0 0 12 12" stroke="#444" strokeWidth="1.700">
                <path d="M1 10.500l9.500-9.500M6 10.500l4.500-4.500" />
              </Grip>
            </TextAreaWrap>
          </Field>
          <SubmitButton>Send Message</SubmitButton>
        </ContactSection>
        <Footer>Designed by S.RAVANT VIGNESH © 2024</Footer>

        <Taskbar>
          <Weather>
            <HazeIcon />
            <TwoLines $size={14.2}>
              27°C
              <Muted>Haze</Muted>
            </TwoLines>
          </Weather>
          <TaskApp><StartIcon /></TaskApp>
          <SearchBox>
            <svg width="19" height="19" viewBox="0 0 19 19" fill="none" stroke="#2a2a2a" strokeWidth="2.200">
              <circle cx="8" cy="8" r="6.800" />
              <path d="M12.800 12.800l5 5" strokeWidth="2.600" />
            </svg>
            <SearchLabel>Search</SearchLabel>
            <SearchArt />
          </SearchBox>
          <TaskApp><TaskViewIcon /></TaskApp>
          <TaskApp><EdgeIcon /></TaskApp>
          <TaskApp><CopilotIcon /></TaskApp>
          <TaskApp><ExplorerIcon /><RunningMark /></TaskApp>
          <TaskApp><FaWhatsapp size={34} color="#1d8f5a" /><Badge>14</Badge><RunningMark /></TaskApp>
          <TaskApp><StoreIcon /></TaskApp>
          <TaskApp><OutlookIcon /></TaskApp>
          <TaskApp><CamuBox><CamuFrame>my</CamuFrame><CamuName>Camu</CamuName></CamuBox></TaskApp>
          <TaskApp $active><ChromeIcon /><RunningMark $focused /></TaskApp>
          <TaskApp><CodeIcon /><RunningMark /></TaskApp>
          <Tray>
            <Slot $w={40}>
              <svg width="14" height="8" viewBox="0 0 14 8" fill="none" stroke="#1c1c1c" strokeWidth="1.700"><path d="M.8 7.200L7 1l6.200 6.200" /></svg>
            </Slot>
            <Slot $w={40}>
              <svg width="21" height="21" viewBox="0 0 21 21" fill="none" stroke="#1c1c1c" strokeWidth="1.300">
                <path d="M1 10.500A9 9 0 0 1 18.500 6.500M19 1v5.700h-5.500M11 20A9 9 0 0 1 2 15.500M1.500 20.500v-5.300H7" />
                <circle cx="15.500" cy="15.500" r="5" fill="#0078d4" stroke="none" />
              </svg>
            </Slot>
            <TwoLines $align="center" $w={56}>
              <div>ENG</div>
              <div>IN</div>
            </TwoLines>
            <Slot $w={4} />
            <Slot $w={30}>
              <svg width="20" height="16" viewBox="0 0 20 16" fill="none" stroke="#1c1c1c" strokeWidth="1.400">
                <path d="M.7 6a13 13 0 0 1 18.600 0M3.500 8.800a9 9 0 0 1 13 0M6.300 11.500a5.200 5.200 0 0 1 7.400 0" />
                <circle cx="10" cy="13.700" r="1.700" fill="#1c1c1c" stroke="none" />
              </svg>
            </Slot>
            <Slot $w={30}>
              <svg width="19" height="15" viewBox="0 0 19 15" fill="none" stroke="#1c1c1c" strokeWidth="1.300" strokeLinejoin="round">
                <path d="M.8 5h3L8 1v13L3.800 10h-3zM11.500 4.500l6.500 6.500M18 4.500L11.500 11" />
              </svg>
            </Slot>
            <Slot $w={30}><BatteryIcon /></Slot>
            <TwoLines $align="right" $w={93} $size={14.9}>
              <div>11:40</div>
              <div>23-12-2024</div>
            </TwoLines>
            <Slot $w={4} />
            <Slot $w={30}>
              <svg width="16" height="19" viewBox="0 0 16 19" fill="#003e92">
                <path d="M8 0a6 6 0 0 1 6 6v5.500l2 3.500v.5H0V15l2-3.500V6a6 6 0 0 1 6-6zM5 16.500h6a3 3 0 0 1-6 0z" />
              </svg>
            </Slot>
          </Tray>
        </Taskbar>
      </Screen>
    </>
  );
}
